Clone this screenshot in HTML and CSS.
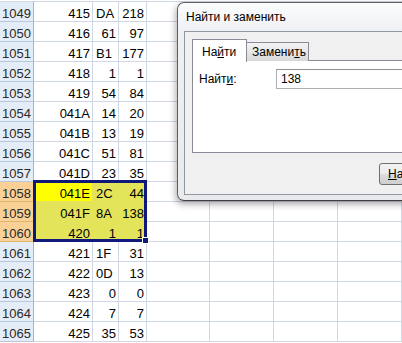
FILE: index.html
```html
<!DOCTYPE html>
<html lang="ru">
<head>
    <meta charset="UTF-8">
    <title>Найти и заменить</title>
    <link rel="stylesheet" href="styles.css">
</head>
<body>
    <div class="sheet">
        <div class="hd">1049</div><div class="r">415</div><div>DA</div><div class="r">218</div><div></div><div></div><div></div><div></div><div></div>
        <div class="hd">1050</div><div class="r">416</div><div class="r">61</div><div class="r">97</div><div></div><div></div><div></div><div></div><div></div>
        <div class="hd">1051</div><div class="r">417</div><div>B1</div><div class="r">177</div><div></div><div></div><div></div><div></div><div></div>
        <div class="hd">1052</div><div class="r">418</div><div class="r">1</div><div class="r">1</div><div></div><div></div><div></div><div></div><div></div>
        <div class="hd">1053</div><div class="r">419</div><div class="r">54</div><div class="r">84</div><div></div><div></div><div></div><div></div><div></div>
        <div class="hd">1054</div><div class="r">041A</div><div class="r">14</div><div class="r">20</div><div></div><div></div><div></div><div></div><div></div>
        <div class="hd">1055</div><div class="r">041B</div><div class="r">13</div><div class="r">19</div><div></div><div></div><div></div><div></div><div></div>
        <div class="hd">1056</div><div class="r">041C</div><div class="r">51</div><div class="r">81</div><div></div><div></div><div></div><div></div><div></div>
        <div class="hd">1057</div><div class="r">041D</div><div class="r">23</div><div class="r">35</div><div></div><div></div><div></div><div></div><div></div>
        <div class="hd on">1058</div><div class="r act">041E</div><div class="sel">2C</div><div class="r sel">44</div><div></div><div></div><div></div><div></div><div></div>
        <div class="hd on">1059</div><div class="r sel">041F</div><div class="sel">8A</div><div class="r sel">138</div><div></div><div></div><div></div><div></div><div></div>
        <div class="hd on">1060</div><div class="r sel">420</div><div class="r sel">1</div><div class="r sel">1</div><div></div><div></div><div></div><div></div><div></div>
        <div class="hd">1061</div><div class="r">421</div><div>1F</div><div class="r">31</div><div></div><div></div><div></div><div></div><div></div>
        <div class="hd">1062</div><div class="r">422</div><div>0D</div><div class="r">13</div><div></div><div></div><div></div><div></div><div></div>
        <div class="hd">1063</div><div class="r">423</div><div class="r">0</div><div class="r">0</div><div></div><div></div><div></div><div></div><div></div>
        <div class="hd">1064</div><div class="r">424</div><div class="r">7</div><div class="r">7</div><div></div><div></div><div></div><div></div><div></div>
        <div class="hd">1065</div><div class="r">425</div><div class="r">35</div><div class="r">53</div><div></div><div></div><div></div><div></div><div></div>
    </div>

    <div class="selection"><span class="handle"></span></div>

    <div class="dialog">
        <div class="title">Найти и заменить</div>
        <div class="client">
            <div class="tabs">
                <div class="tab active">На<u>й</u>ти</div>
                <div class="tab">Замени<u>т</u>ь</div>
            </div>
            <div class="panel">
                <div class="field">
                    <label for="what">Найт<u>и</u>:</label>
                    <input type="text" id="what" value="138">
                </div>
            </div>
            <div class="actions">
                <button type="button"><u>Н</u>айти все</button>
            </div>
        </div>
    </div>
</body>
</html>
```

FILE: styles.css
```css
body {
    margin: 0;
    width: 402px;
    height: 343px;
    overflow: hidden;
    position: relative;
    background: #fff;
    font-family: "Liberation Sans", Arial, sans-serif;
}
.sheet {
    margin-top: 1px;
    border-top: 1px solid #d0d7e5;
    display: grid;
    grid-template-columns: 34px 59px 26px 28px 63px 64px 64px 64px 64px;
    grid-auto-rows: 20px;
    font-size: 13px;
    color: #000;
}
.sheet > div {
    box-sizing: border-box;
    display: flex;
    align-items: flex-end;
    padding: 0 2px 1px 3px;
    border-right: 1px solid #d0d7e5;
    border-bottom: 1px solid #d0d7e5;
    white-space: nowrap;
    line-height: 13px;
}
.sheet .r {
    justify-content: flex-end;
}
.sheet .hd {
    justify-content: center;
    padding: 0 0 1px;
    background: #e4ecf7;
    border-right-color: #9eb6ce;
    border-bottom-color: #b8c9db;
    color: #2a2a2a;
}
.sheet .hd.on {
    background: #f9d196;
    border-bottom-color: #e3b46c;
}
.sheet .sel {
    background: #e4e45a;
    border-color: #e4e45a;
}
.sheet .act {
    background: #ffff00;
    border-color: #e4e45a;
}
.selection {
    position: absolute;
    left: 33px;
    top: 180px;
    width: 114px;
    height: 62px;
    box-sizing: border-box;
    border: 3px solid #10187a;
}
.selection .handle {
    position: absolute;
    right: -5px;
    bottom: -5px;
    width: 5px;
    height: 5px;
    background: #10187a;
    border: 1px solid #fff;
}
.dialog {
    position: absolute;
    left: 177px;
    top: 2px;
    width: 330px;
    height: 199px;
    box-sizing: border-box;
    display: flex;
    flex-direction: column;
    padding: 0 0 5px 6px;
    border: 1px solid #5f5f5f;
    border-right: none;
    border-bottom-color: #3f3f3f;
    border-radius: 7px 0 0 7px;
    background: linear-gradient(#fbfcfd, #eef1f4 28px, #e8ebee);
    box-shadow: -1px 3px 7px rgba(0, 0, 0, 0.35);
    font-size: 12px;
    color: #000;
}
.title {
    height: 28px;
    line-height: 28px;
    padding-left: 2px;
}
.client {
    flex: 1;
    display: flex;
    flex-direction: column;
    padding: 7px 0 0 7px;
    border: 1px solid #9097a0;
    border-right: none;
    background: #f0f0f0;
}
.tabs {
    display: flex;
    align-items: flex-start;
    height: 22px;
    margin-bottom: -1px;
    position: relative;
    z-index: 1;
}
.tab {
    box-sizing: border-box;
    width: 62px;
    height: 19px;
    margin-top: 3px;
    padding-left: 5px;
    line-height: 18px;
    border: 1px solid #898c95;
    border-bottom: none;
    border-left: none;
    background: linear-gradient(#f3f3f3, #e6e6e6 50%, #d9d9d9);
}
.tab.active {
    width: 55px;
    height: 23px;
    margin-top: 0;
    padding-left: 9px;
    line-height: 24px;
    border-left: 1px solid #898c95;
    background: #fff;
}
.panel {
    box-sizing: border-box;
    height: 93px;
    padding: 8px 0 0 6px;
    border: 1px solid #898c95;
    border-right: none;
    background: #fff;
}
.field {
    display: flex;
    align-items: center;
}
.field label {
    flex-shrink: 0;
    width: 77px;
}
.field input {
    flex-shrink: 0;
    box-sizing: border-box;
    width: 220px;
    height: 20px;
    padding: 0 0 0 4px;
    border: 1px solid #abadb3;
    border-top-color: #8d8f94;
    font: 12px "Liberation Sans", Arial, sans-serif;
    outline: none;
}
.actions {
    display: flex;
    padding: 10px 0 0 187px;
}
.actions button {
    flex-shrink: 0;
    height: 22px;
    width: 80px;
    padding: 0 0 0 8px;
    text-align: left;
    white-space: nowrap;
    border: 1px solid #707070;
    border-radius: 3px;
    background: linear-gradient(#f2f2f2, #ebebeb 50%, #dddddd 50%, #cfcfcf);
    font: 12px "Liberation Sans", Arial, sans-serif;
    color: #000;
}
```
